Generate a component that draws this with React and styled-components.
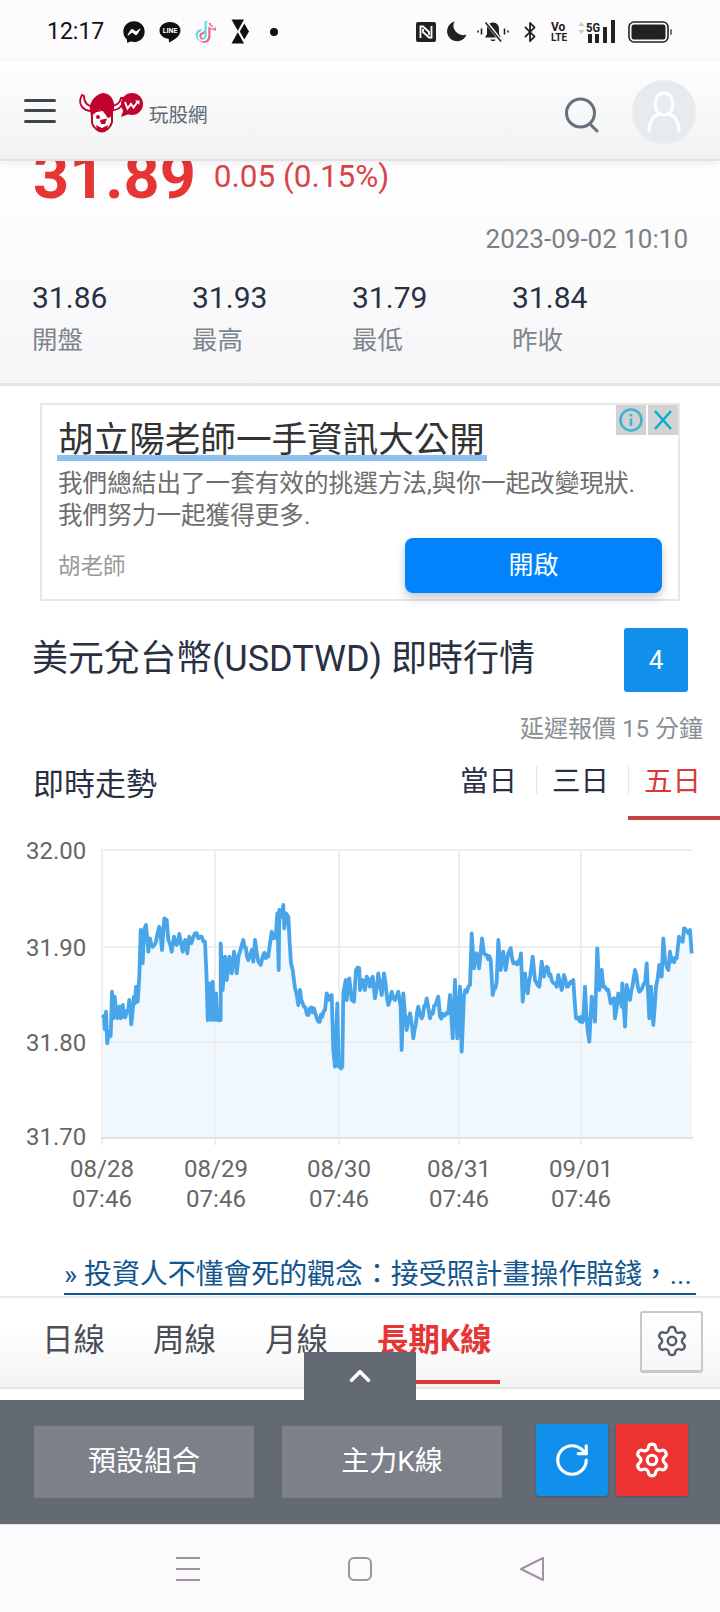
import React from "react";
import styled, { createGlobalStyle } from "styled-components";
import { RotateCw, Settings, ChevronUp, Bluetooth } from "lucide-react";
import { FaFacebookMessenger } from "react-icons/fa";

const FONT = `Roboto, "Noto Sans CJK TC", sans-serif`;

const GlobalStyle = createGlobalStyle`
  html, body {
    margin: 0;
    padding: 0;
    background: #fff;
  }
  body {
    font-family: ${FONT};
  }
  * {
    box-sizing: border-box;
  }
`;

// traced from the chart, x/3 and 830+y/3 give page pixels
const leftTrace = [[307,555],[312,560],[314,598],[318,545],[322,640],[326,605],[332,618],[336,485],[340,565],[344,500],[352,565],[358,530],[362,565],[368,525],[372,560],[384,545],[388,510],[394,583],[402,500],[405,520],[408,470],[413,515],[418,440],[422,300],[428,400],[432,300],[438,285],[445,365],[450,325],[458,350],[468,335],[478,290],[486,360],[493,265],[500,270],[505,330],[515,365],[522,320],[530,345],[538,312],[548,365],[556,330],[562,370],[568,320],[574,340],[585,310],[595,325],[605,320],[615,335],[620,450],[623,570],[628,460],[632,570],[638,455],[642,570],[648,490],[652,570],[662,570],[662,340],[668,480],[675,380],[680,450],[688,380],[695,430],[702,365],[710,430],[716,375],[730,330],[745,390],[755,360],[760,395],[765,330],[775,395],[782,405],[790,375],[805,380],[815,305],[820,325],[828,310],[832,250],[836,420],[838,240],[845,260],[850,225],[853,295],[858,250],[865,260],[873,400],[878,420],[885,475],[895,525],[900,480],[908,520],[925,555],[930,535],[945,545],[955,575],[975,540],[980,490],[985,510],[995,495],[1000,660],[1005,710],[1012,520],[1016,710],[1027,710],[1030,490],[1037,450],[1040,510],[1048,445],[1055,510],[1062,515],[1068,420],[1078,415]];
const rightTrace = [[0,480],[8,450],[15,480],[20,440],[30,470],[38,440],[45,505],[55,430],[65,495],[72,430],[85,525],[95,485],[105,510],[115,485],[122,530],[125,660],[130,490],[140,600],[150,550],[160,625],[175,530],[185,565],[200,505],[210,565],[235,500],[240,560],[265,550],[270,495],[278,625],[285,450],[292,625],[300,470],[305,665],[312,495],[325,470],[330,465],[335,310],[342,415],[350,370],[357,415],[366,325],[372,370],[392,390],[398,495],[410,455],[415,330],[422,420],[430,365],[437,420],[445,370],[452,355],[460,400],[478,400],[483,370],[488,515],[495,430],[503,490],[518,380],[525,450],[538,470],[545,395],[552,440],[560,410],[575,450],[590,470],[595,435],[605,480],[612,435],[620,470],[640,450],[648,565],[670,570],[675,470],[680,570],[688,635],[695,500],[705,575],[712,355],[718,480],[725,420],[730,470],[745,480],[752,520],[762,505],[765,565],[775,490],[785,530],[787,460],[795,590],[800,465],[810,510],[825,420],[838,485],[855,460],[860,400],[868,565],[873,470],[880,585],[888,470],[898,405],[905,440],[910,325],[915,390],[925,420],[930,365],[935,395],[950,385],[957,320],[968,335],[972,295],[985,310],[990,300],[995,370]];

const tracePoints = [
  ...leftTrace.map(([x, y]) => [x / 3, 830 + y / 3]),
  ...rightTrace.map(([x, y]) => [360 + x / 3, 830 + y / 3]),
];

// the real series ticks far finer than the trace, add a small fixed jitter
const jittered = [];
tracePoints.forEach(([x, y], i) => {
  const next = tracePoints[i + 1];
  jittered.push([x, y]);
  if (!next) return;
  const steps = Math.floor((next[0] - x) / 1.2);
  for (let s = 1; s < steps; s++) {
    const t = s / steps;
    const wobble = Math.sin(s * 2.7 + i * 1.3) * 2.6;
    jittered.push([x + (next[0] - x) * t, y + (next[1] - y) * t + wobble]);
  }
});

const linePath = `M${jittered
  .map(([x, y]) => `${x.toFixed(1)} ${y.toFixed(1)}`)
  .join(" L")}`;
const areaPath = `${linePath} L692 1138 L102 1138 Z`;

const yLabels = [
  { text: "32.00", y: 850 },
  { text: "31.90", y: 947 },
  { text: "31.80", y: 1042 },
  { text: "31.70", y: 1136 },
];
const xLabels = [
  { date: "08/28", x: 102 },
  { date: "08/29", x: 216 },
  { date: "08/30", x: 339 },
  { date: "08/31", x: 459 },
  { date: "09/01", x: 581 },
];
const stats = [
  { value: "31.86", label: "開盤" },
  { value: "31.93", label: "最高" },
  { value: "31.79", label: "最低" },
  { value: "31.84", label: "昨收" },
];

const Page = styled.div`
  width: 720px;
  height: 1612px;
  overflow: hidden;
  display: flex;
  flex-direction: column;
  background: #fff;
  font-family: ${FONT};
`;

const StatusBar = styled.div`
  height: 61px;
  flex: none;
  display: flex;
  align-items: center;
  justify-content: space-between;
  padding: 2px 47px 0 47px;
  background: #fdfbfe;
`;

const StatusGroup = styled.div`
  display: flex;
  align-items: center;
  gap: ${(p) => p.$gap}px;
  margin-right: ${(p) => p.$right || 0}px;
`;

const Clock = styled.span`
  font-size: 23px;
  color: #111;
  margin-right: 5px;
`;

const IconSvg = styled.svg`
  display: block;
  flex: none;
  margin-left: ${(p) => p.$left || 0}px;
  margin-top: ${(p) => p.$top || 0}px;
`;

const Header = styled.header`
  position: relative;
  z-index: 2;
  height: 100px;
  flex: none;
  display: flex;
  align-items: center;
  padding: 4px 24px 0;
  background: linear-gradient(#fefefe, #f1f2f2);
  border-bottom: 2px solid #e0e2e6;
  box-shadow: 0 2px 8px rgba(0, 0, 0, 0.07);
`;

const Burger = styled.div`
  width: 32px;
  height: 24px;
  display: flex;
  flex-direction: column;
  justify-content: space-between;
  margin: -3px 23px 0 0;

  i {
    display: block;
    height: 3px;
    border-radius: 2px;
    background: #3f454e;
  }
`;

const Brand = styled.span`
  font-size: 19.500px;
  line-height: 24px;
  color: #5f6875;
  margin: 8px 0 0 4px;
`;

const HeaderRight = styled.div`
  margin-left: auto;
  display: flex;
  align-items: center;
  gap: 32px;
`;

const Avatar = styled.div`
  width: 64px;
  height: 64px;
  border-radius: 50%;
  background: #e8ebee;
  display: flex;
  align-items: center;
  justify-content: center;
`;

const Quote = styled.section`
  padding: 0 32px 25px 33px;
  margin-top: -15px;
  background: linear-gradient(#fff, #f6f6f8);
  border-bottom: 3px solid #e2e4e8;
`;

const PriceRow = styled.div`
  display: flex;
  align-items: flex-start;
`;

const Price = styled.span`
  font-size: 63px;
  line-height: 62px;
  font-weight: 700;
  color: #e53535;
`;

const Delta = styled.span`
  margin: 13px 0 0 18px;
  font-size: 31.500px;
  line-height: 36px;
  color: #d9444a;
`;

const QuoteTime = styled.div`
  margin-top: 16px;
  text-align: right;
  font-size: 26px;
  line-height: 30px;
  color: #7a8087;
`;

const StatRow = styled.div`
  margin: 26px 0 0 -1px;
  display: grid;
  grid-template-columns: repeat(4, 160px);
`;

const StatValue = styled.div`
  font-size: 30px;
  line-height: 36px;
  color: #2a3044;
`;

const StatLabel = styled.div`
  margin-top: 6px;
  font-size: 25.500px;
  line-height: 36px;
  color: #7d858c;
`;

const Ad = styled.aside`
  position: relative;
  flex: none;
  height: 198px;
  margin: 17px 40px 0;
  padding: 13px 16px 0;
  border: 2px solid #e8e8e8;
  background: #fff;
`;

const AdClose = styled.div`
  position: absolute;
  top: 0;
  right: 0;
  display: flex;
  gap: 2px;
`;

const AdCloseCell = styled.div`
  width: 30px;
  height: 30px;
  background: #d2d2d2;
  display: flex;
  align-items: center;
  justify-content: center;
`;

const AdTitle = styled.div`
  display: inline-block;
  height: 43px;
  margin-left: -1px;
  padding: 0 2px 0 1px;
  font-size: 35.600px;
  line-height: 44px;
  color: #333;
  white-space: nowrap;
  border-bottom: 6px solid #8cc0ef;
`;

const AdText = styled.p`
  margin: 7px 0 0;
  font-size: 24.600px;
  line-height: 32px;
  color: #6e6e6e;
  white-space: nowrap;
`;

const AdFoot = styled.div`
  margin-top: 6px;
  display: flex;
  align-items: center;
  justify-content: space-between;
`;

const AdName = styled.span`
  font-size: 22.500px;
  color: #9a9a9a;
  margin-top: -4px;
`;

const AdButton = styled.div`
  width: 257px;
  height: 55px;
  line-height: 55px;
  text-align: center;
  font-size: 25px;
  color: #fff;
  background: #0083fb;
  border-radius: 8px;
  box-shadow: 0 5px 10px rgba(60, 70, 100, 0.3);
`;

const TitleRow = styled.div`
  flex: none;
  margin-top: 27px;
  padding: 0 32px 0 32px;
  display: flex;
  align-items: center;
  justify-content: space-between;
`;

const Title = styled.h1`
  margin: 0;
  padding-bottom: 10px;
  font-size: 36px;
  font-weight: 400;
  color: #2a3044;
  white-space: nowrap;
`;

const Badge = styled.div`
  width: 64px;
  height: 64px;
  border-radius: 3px;
  background: #1090ea;
  color: #fff;
  font-size: 26px;
  line-height: 64px;
  text-align: center;
`;

const Delay = styled.div`
  flex: none;
  margin-top: 22px;
  padding-right: 17px;
  text-align: right;
  font-size: 24px;
  line-height: 30px;
  color: #8a8f94;
`;

const TrendRow = styled.div`
  flex: none;
  display: flex;
  align-items: center;
  justify-content: space-between;
  padding-left: 33px;
`;

const TrendTitle = styled.h2`
  margin: 0;
  padding-bottom: 2px;
  font-size: 31px;
  font-weight: 400;
  color: #2a3044;
`;

const RangeTabs = styled.div`
  display: flex;
`;

const RangeTab = styled.div`
  position: relative;
  width: 92px;
  height: 76px;
  line-height: 76px;
  padding-left: 16px;
  font-size: 28.500px;
  color: ${(p) => (p.$active ? "#d83a3a" : "#2a3044")};
  border-bottom: 4px solid ${(p) => (p.$active ? "#c94040" : "transparent")};

  &:not(:first-child)::before {
    content: "";
    position: absolute;
    left: 0;
    top: 22px;
    width: 1px;
    height: 28px;
    background: #e3e5e8;
  }
`;

const ChartSvg = styled.svg`
  display: block;
  flex: none;
  width: 720px;
  height: 436px;

  text {
    font-family: ${FONT};
    fill: #666;
    font-size: 24px;
  }
`;

const ArticleLink = styled.a`
  display: block;
  flex: none;
  margin: 0 24px 0 64px;
  height: 39px;
  line-height: 38px;
  font-size: 27.900px;
  color: #13568f;
  border-bottom: 2px solid #13568f;
  white-space: nowrap;
  overflow: hidden;
`;

const KTabsBar = styled.div`
  flex: none;
  height: 93px;
  margin-top: 1px;
  padding: 0 17px 0 42px;
  display: flex;
  align-items: center;
  background: linear-gradient(#fff 30%, #f4f4f5);
  border-top: 2px solid #e9e9e9;
  border-bottom: 2px solid #e4e4e4;
`;

const KTab = styled.div`
  position: relative;
  width: ${(p) => p.$width}px;
  font-size: 31.500px;
  line-height: 40px;
  white-space: nowrap;
  margin-top: -3px;
  font-weight: ${(p) => (p.$active ? 700 : 400)};
  color: ${(p) => (p.$active ? "#e53535" : "#4a4f57")};

  ${(p) =>
    p.$active &&
    `&::after {
      content: "";
      position: absolute;
      left: -10px;
      right: 17px;
      bottom: -23px;
      height: 4px;
      background: #d83a3a;
    }`}
`;

const GearButton = styled.div`
  margin-left: auto;
  width: 63px;
  height: 62px;
  margin-top: -2px;
  border: 2px solid #c5c9ce;
  border-bottom-width: 3px;
  border-radius: 3px;
  background: linear-gradient(#fff, #f6f6f6);
  display: flex;
  align-items: center;
  justify-content: center;
  color: #555c66;
`;

const Panel = styled.div`
  position: relative;
  z-index: 3;
  flex: none;
  height: 125px;
  margin-top: 11px;
  padding: 24px 32px 0 34px;
  display: flex;
  align-items: flex-start;
  background: #646a74;
  border-bottom: 1px solid #f6dcd8;
`;

const PanelHandle = styled.div`
  position: absolute;
  left: 304px;
  bottom: 100%;
  width: 112px;
  height: 48px;
  background: #646a74;
  color: #fff;
  display: flex;
  align-items: center;
  justify-content: center;
`;

const PanelButton = styled.div`
  width: 220px;
  height: 72px;
  margin: 2px 28px 0 0;
  border-radius: 2px;
  background: #7c8089;
  color: #fff;
  font-size: 28px;
  line-height: 72px;
  text-align: center;
`;

const SquareButton = styled.div`
  width: 72px;
  height: 72px;
  margin-left: ${(p) => p.$left}px;
  border-radius: 3px;
  background: ${(p) => p.$color};
  color: #fff;
  display: flex;
  align-items: center;
  justify-content: center;
  box-shadow: 0 1px 3px rgba(0, 0, 0, 0.25);
`;

const NavBar = styled.nav`
  flex: 1;
  background: #fdfafd;
  display: grid;
  grid-template-columns: repeat(3, 24px);
  justify-content: center;
  column-gap: 148px;
  align-items: center;
`;

const LineLogo = () => (
  <IconSvg width="22" height="22" viewBox="0 0 22 22">
    <path d="M11 1C5 1 .5 4.700.5 9.500 .5 14 4.500 17.500 9.800 17.900L10 21.500C12.500 20.500 21.500 16 21.500 9.500 21.500 4.700 17 1 11 1Z" fill="#111" />
    <text x="11" y="12" textAnchor="middle" fontSize="7" fontWeight="700" fill="#fff" fontFamily="Roboto">LINE</text>
  </IconSvg>
);

const TikTokLogo = () => {
  const d = "M12.500 3v14a4.500 4.500 0 1 1-4.500-4.500M12.500 3c.5 3.500 3 6 7 6";
  return (
    <IconSvg width="22" height="26" viewBox="0 0 22 26" fill="none" strokeWidth="3">
      <path d={d} transform="translate(-1.500 -1)" stroke="#5fdde6" />
      <path d={d} transform="translate(1.500 1)" stroke="#f0688a" />
      <path d={d} stroke="#fff" strokeWidth="1.600" />
    </IconSvg>
  );
};

const HourglassLogo = () => (
  <IconSvg width="18" height="25" viewBox="0 0 18 25">
    <path d="M.5 .5H13L6.800 11.800ZM.5 24.500H13L6.800 13.200ZM13.300 4.500L18 12.500 13.300 20.500 8.800 12.500Z" fill="#111" />
  </IconSvg>
);

const NfcIcon = () => (
  <IconSvg width="20" height="20" viewBox="0 0 20 20">
    <rect width="20" height="20" rx="2" fill="#222" />
    <path d="M4.500 16V4.500H7L13 10V13M15.500 4V15.500H13L7 10V7" fill="none" stroke="#fff" strokeWidth="1.800" />
  </IconSvg>
);

const MoonIcon = () => (
  <IconSvg width="21" height="21" viewBox="0 0 21 21">
    <path d="M8.500 .500A10 10 0 1 0 20.500 13.500 9.500 9.500 0 0 1 8.500 .500Z" fill="#222" />
  </IconSvg>
);

const BellOffIcon = () => (
  <IconSvg width="32" height="24" viewBox="0 0 32 22">
    <path d="M16 1.500C12 1.500 10 4.500 10 8V13L8 16.500H24L22 13V8C22 4.500 20 1.500 16 1.500ZM13.500 18.500H18.500C18 20.500 14 20.500 13.500 18.500Z" fill="#222" />
    <path d="M9 1L24 20" stroke="#fdfbfe" strokeWidth="3.500" />
    <path d="M8.500 1.500L24 20.500" stroke="#222" strokeWidth="1.600" />
    <path d="M1 9.500V11.500M4.500 7.500V13.500M27.500 7.500V13.500M31 9.500V11.500" stroke="#222" strokeWidth="1.600" />
  </IconSvg>
);

const VoLteIcon = () => (
  <IconSvg width="17" height="24" viewBox="0 0 17 24">
    <text x="0" y="11" fontSize="12" fontWeight="700" fill="#222" fontFamily="Roboto">Vo</text>
    <text x="0" y="21" fontSize="10" fontWeight="700" fill="#222" fontFamily="Roboto">LTE</text>
  </IconSvg>
);

const SignalIcon = () => (
  <IconSvg width="40" height="28" viewBox="0 0 40 28">
    <path d="M3.500 4L6.500 8H.500ZM3.500 16L.500 12H6.500Z" fill="#c8c8cc" />
    <text x="8" y="14" fontSize="13" fontWeight="700" fill="#222" fontFamily="Roboto" textLength="14" lengthAdjust="spacingAndGlyphs">5G</text>
    <rect x="10" y="16" width="4" height="9" fill="#222" />
    <rect x="17" y="16" width="4" height="9" fill="#222" />
    <rect x="25" y="9" width="4" height="16" fill="#222" />
    <rect x="33" y="2" width="4" height="23" fill="#222" />
  </IconSvg>
);

const BatteryIcon = () => (
  <IconSvg width="44" height="22" viewBox="0 0 44 22">
    <rect x="1" y="1" width="39" height="20" rx="5" fill="none" stroke="#222" strokeWidth="1.600" />
    <rect x="3.500" y="3.500" width="34" height="15" rx="2.500" fill="#222" />
    <rect x="42" y="8" width="2" height="6" rx="1" fill="#777" />
  </IconSvg>
);

const BullLogo = () => (
  <IconSvg width="66" height="42" viewBox="80 93 66 42">
    <path d="M83 97C78 106 84 113 93 113L95 108C89 109 85 105 85 98Z" fill="#fff" stroke="#c0032c" strokeWidth="1.800" />
    <path d="M124 100C125 108 119 113 112 112L112 108C117 108 121 105 122 100Z" fill="#fff" stroke="#c0032c" strokeWidth="1.800" />
    <path d="M93 114V125C95 131 100 133.500 103 133.500 107 133.500 112 129 113 124V110Z" fill="#fff" stroke="#c0032c" strokeWidth="2" />
    <path d="M91 112C90 102 99 95 105 95 112 96 116 103 115 110 114 115 112 120 109 120 107 118 105 113 101 111 97 114 94 117 92 118 91 116 91 112Z" fill="#c0032c" />
    <circle cx="99" cy="119" r="2" fill="#c0032c" />
    <path d="M101 122L108 120.500 106 126 102 126Z" fill="#c0032c" />
    <path d="M97 127L103 130 109 127 108 132 103 134 98 132Z" fill="#c0032c" />
    <circle cx="133" cy="106" r="11" fill="#c0032c" />
    <path d="M124.500 112L122 119 130 116Z" fill="#c0032c" />
    <path d="M126 104L128.500 110.500 132 106 134.500 109.500 138.500 104" fill="none" stroke="#fff" strokeWidth="2" />
    <path d="M136 102.500H140.500V107Z" fill="#fff" />
  </IconSvg>
);

const SearchIcon = () => (
  <IconSvg width="36" height="36" viewBox="0 0 36 36" fill="none" stroke="#68717b" strokeWidth="3" $top={6}>
    <circle cx="16.500" cy="16" r="14" />
    <path d="M26 27L33 34" strokeLinecap="round" />
  </IconSvg>
);

const UserIcon = () => (
  <IconSvg width="34" height="42" viewBox="0 0 34 42" fill="none" stroke="#fff" strokeWidth="3">
    <ellipse cx="17" cy="13" rx="9" ry="11" />
    <path d="M2 40C2 30 7 25 12 23M32 40C32 30 27 25 22 23" strokeLinecap="round" />
  </IconSvg>
);

const InfoIcon = () => (
  <IconSvg width="26" height="26" viewBox="0 0 26 26" fill="none" stroke="#3fb4d0" strokeWidth="2.600">
    <circle cx="13" cy="13" r="10.500" />
    <path d="M13 11.500V19M13 7V9.500" />
  </IconSvg>
);

const CloseIcon = () => (
  <IconSvg width="24" height="24" viewBox="0 0 24 24" fill="none" stroke="#00aecd" strokeWidth="2.400">
    <path d="M4 3L20 21M20 3L4 21" />
  </IconSvg>
);

const NavMenu = () => (
  <IconSvg width="24" height="24" viewBox="0 0 24 24" stroke="#9b969c" strokeWidth="2">
    <path d="M0 1H24M0 12H24M0 23H24" />
  </IconSvg>
);

const NavHome = () => (
  <IconSvg width="24" height="24" viewBox="0 0 24 24" fill="none" stroke="#9b969c" strokeWidth="2">
    <rect x="1" y="1" width="22" height="22" rx="5" />
  </IconSvg>
);

const NavBack = () => (
  <IconSvg width="24" height="24" viewBox="0 0 24 24" fill="none" stroke="#9b969c" strokeWidth="2" strokeLinejoin="round">
    <path d="M23 1V23L1 12Z" />
  </IconSvg>
);

const Chart = () => (
  <ChartSvg viewBox="0 820 720 436">
    <g stroke="#eceef0" strokeWidth="2">
      <path d="M101 850H693M101 947H693M101 1042H693" />
      <path d="M102 850V1145M215 850V1145M339 850V1145M459 850V1145M581 850V1145" />
    </g>
    <path d={areaPath} fill="#f0f7fd" />
    <g stroke="#eceef0" strokeWidth="2" opacity="0.7">
      <path d="M215 1000V1138M339 1000V1138M459 1000V1138M581 1000V1138M101 1042H693" />
    </g>
    <path d={linePath} fill="none" stroke="#48a5ea" strokeWidth="3.800" strokeLinejoin="round" />
    <path d="M101 1138H693" stroke="#e1e3e6" strokeWidth="2" />
    {yLabels.map((l) => (
      <text key={l.text} x="26" y={l.y + 9}>
        {l.text}
      </text>
    ))}
    {xLabels.map((l) => (
      <g key={l.date} textAnchor="middle">
        <text x={l.x} y="1177">
          {l.date}
        </text>
        <text x={l.x} y="1207">
          07:46
        </text>
      </g>
    ))}
  </ChartSvg>
);

const App = () => (
  <Page>
    <GlobalStyle />
    <StatusBar>
      <StatusGroup $gap={14}>
        <Clock>12:17</Clock>
        <FaFacebookMessenger size={22} color="#111" />
        <LineLogo />
        <TikTokLogo />
        <HourglassLogo />
        <IconSvg width="8" height="8" viewBox="0 0 8 8" $left={7}>
          <circle cx="4" cy="4" r="4" fill="#111" />
        </IconSvg>
      </StatusGroup>
      <StatusGroup $gap={10} $right={1}>
        <NfcIcon />
        <MoonIcon />
        <BellOffIcon />
        <Bluetooth size={22} color="#222" strokeWidth={2} />
        <VoLteIcon />
        <SignalIcon />
        <BatteryIcon />
      </StatusGroup>
    </StatusBar>

    <Header>
      <Burger>
        <i />
        <i />
        <i />
      </Burger>
      <BullLogo />
      <Brand>玩股網</Brand>
      <HeaderRight>
        <SearchIcon />
        <Avatar>
          <UserIcon />
        </Avatar>
      </HeaderRight>
    </Header>

    <Quote>
      <PriceRow>
        <Price>31.89</Price>
        <Delta>0.05 (0.15%)</Delta>
      </PriceRow>
      <QuoteTime>2023-09-02 10:10</QuoteTime>
      <StatRow>
        {stats.map((s) => (
          <div key={s.label}>
            <StatValue>{s.value}</StatValue>
            <StatLabel>{s.label}</StatLabel>
          </div>
        ))}
      </StatRow>
    </Quote>

    <Ad>
      <AdClose>
        <AdCloseCell>
          <InfoIcon />
        </AdCloseCell>
        <AdCloseCell>
          <CloseIcon />
        </AdCloseCell>
      </AdClose>
      <AdTitle>胡立陽老師一手資訊大公開</AdTitle>
      <AdText>
        我們總結出了一套有效的挑選方法,與你一起改變現狀.
        <br />
        我們努力一起獲得更多.
      </AdText>
      <AdFoot>
        <AdName>胡老師</AdName>
        <AdButton>開啟</AdButton>
      </AdFoot>
    </Ad>

    <TitleRow>
      <Title>美元兌台幣(USDTWD) 即時行情</Title>
      <Badge>4</Badge>
    </TitleRow>
    <Delay>延遲報價 15 分鐘</Delay>

    <TrendRow>
      <TrendTitle>即時走勢</TrendTitle>
      <RangeTabs>
        <RangeTab>當日</RangeTab>
        <RangeTab>三日</RangeTab>
        <RangeTab $active>五日</RangeTab>
      </RangeTabs>
    </TrendRow>

    <Chart />

    <ArticleLink>» 投資人不懂會死的觀念：接受照計畫操作賠錢，...</ArticleLink>

    <KTabsBar>
      <KTab $width={111}>日線</KTab>
      <KTab $width={112}>周線</KTab>
      <KTab $width={112}>月線</KTab>
      <KTab $width={140} $active>
        長期K線
      </KTab>
      <GearButton>
        <Settings size={34} strokeWidth={1.7} />
      </GearButton>
    </KTabsBar>

    <Panel>
      <PanelHandle>
        <ChevronUp size={34} strokeWidth={2.6} />
      </PanelHandle>
      <PanelButton>預設組合</PanelButton>
      <PanelButton>主力K線</PanelButton>
      <SquareButton $left={6} $color="#1090ea">
        <RotateCw size={38} strokeWidth={2} />
      </SquareButton>
      <SquareButton $left={8} $color="#ee3333">
        <Settings size={38} strokeWidth={2} />
      </SquareButton>
    </Panel>

    <NavBar>
      <NavMenu />
      <NavHome />
      <NavBack />
    </NavBar>
  </Page>
);

export default App;
